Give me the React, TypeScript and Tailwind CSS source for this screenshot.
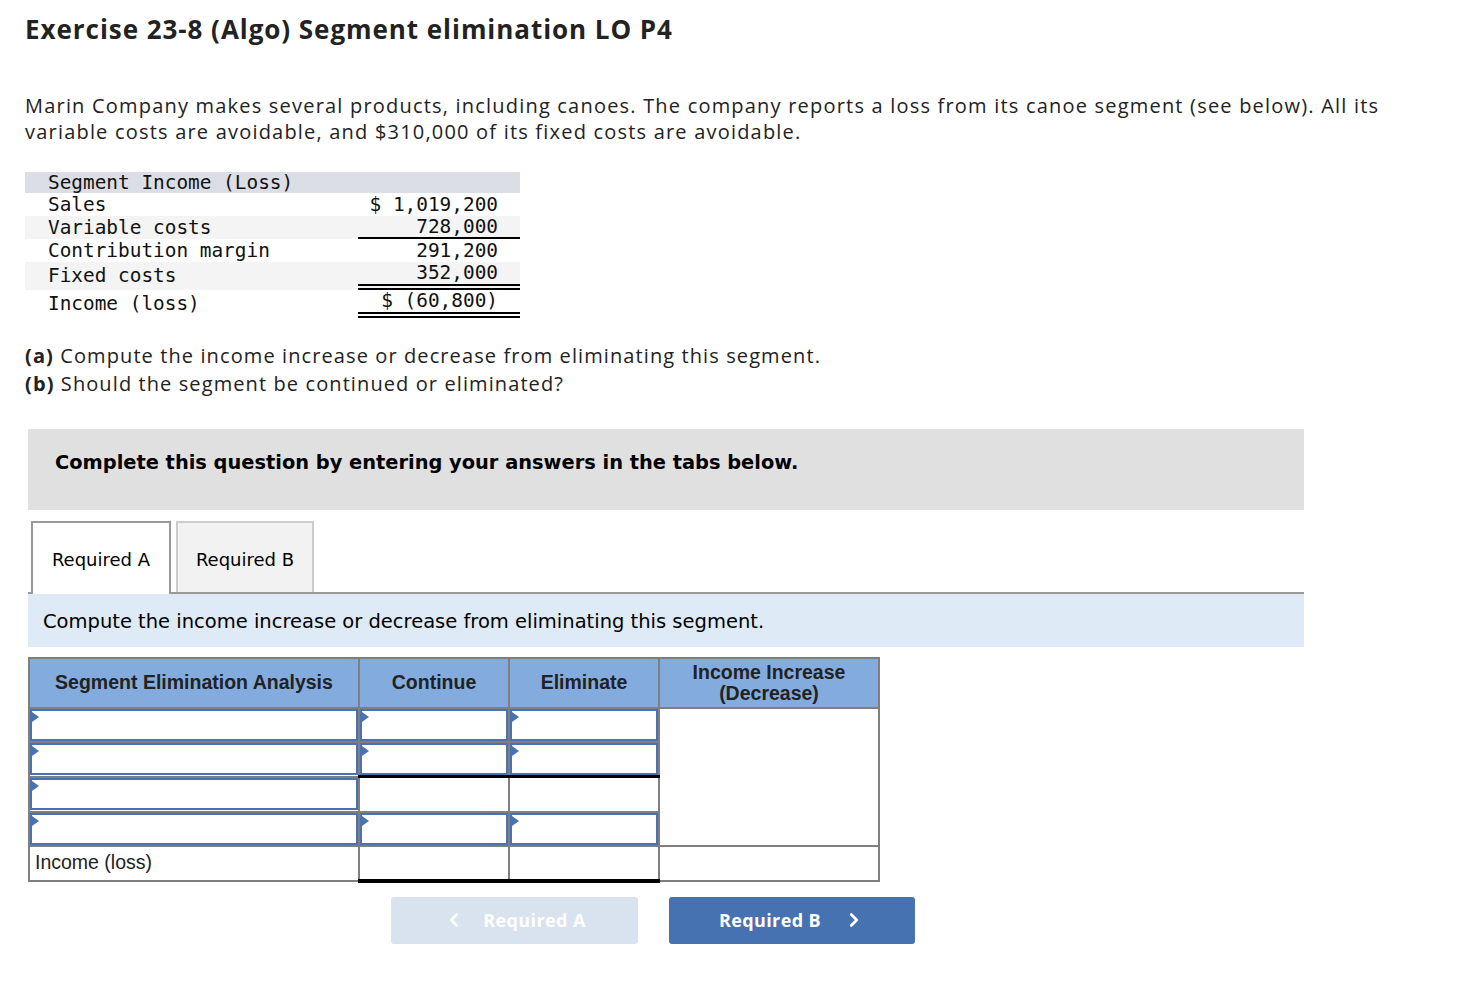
import { ChevronLeft, ChevronRight } from 'lucide-react'

const body = { fontFamily: '"Open Sans", Lato, sans-serif' }
const verdana = { fontFamily: '"DejaVu Sans", Verdana, sans-serif' }
const arial = { fontFamily: '"Liberation Sans", Arial, sans-serif' }
const mono = { fontFamily: '"DejaVu Sans Mono", "Liberation Mono", monospace' }

const rows = [
  { label: 'Sales', value: '$ 1,019,200', bg: 'bg-white', h: 'h-[23px]', line: '' },
  { label: 'Variable costs', value: '728,000', bg: 'bg-[#f4f4f4]', h: 'h-[23px]', line: 'border-b-2 border-black' },
  { label: 'Contribution margin', value: '291,200', bg: 'bg-white', h: 'h-[23px]', line: '' },
  { label: 'Fixed costs', value: '352,000', bg: 'bg-[#f4f4f4]', h: 'h-[28px]', line: 'border-b-[6px] border-double border-black' },
  { label: 'Income (loss)', value: '$ (60,800)', bg: 'bg-white', h: 'h-[28px]', line: 'border-b-[6px] border-double border-black' },
]

function Input() {
  return (
    <div className="relative h-[32px] border-2 border-[#4a72b0] bg-white">
      <div className="absolute left-0 top-[1px] h-0 w-0 border-y-[5px] border-l-[7px] border-y-transparent border-l-[#4a72b0]" />
    </div>
  )
}

export default function App() {
  return (
    <div className="min-h-[1004px] bg-white pl-[25px] pt-[13px] text-[#222]" style={body}>
      <h1 className="whitespace-nowrap text-[26px] font-bold leading-[32px] tracking-[0.95px] text-[#222]">
        Exercise 23-8 (Algo) Segment elimination LO P4
      </h1>

      <p className="mt-[48px] whitespace-nowrap text-[20px] leading-[26px] tracking-[1.2px]">
        Marin Company makes several products, including canoes. The company reports a loss from its canoe segment (see below). All its
        <br />
        variable costs are avoidable, and $310,000 of its fixed costs are avoidable.
      </p>

      {/* segment table */}
      <div className="mt-[27px] w-[495px] text-[19.4px] text-[#111]" style={mono}>
        <div className="flex h-[21px] items-center bg-[#dcdee6] pl-[23px] leading-none">Segment Income (Loss)</div>
        {rows.map((r) => (
          <div key={r.label} className={`flex ${r.h} ${r.bg}`}>
            <div className="flex w-[333px] items-center pl-[23px] leading-none">{r.label}</div>
            <div className={`flex flex-1 items-center justify-end pr-[22px] leading-none ${r.line}`}>{r.value}</div>
          </div>
        ))}
      </div>

      <div className="mt-[24px] whitespace-nowrap text-[20px] leading-[28px] tracking-[1.1px]">
        <p><b>(a)</b> Compute the income increase or decrease from eliminating this segment.</p>
        <p><b>(b)</b> Should the segment be continued or eliminated?</p>
      </div>

      <div className="ml-[3px] w-[1276px]">
        <div className="mt-[31px] h-[81px] bg-[#e0e0e0] pl-[27px] pt-[22px] text-[19.4px] font-bold leading-[23px] text-black" style={verdana}>
          Complete this question by entering your answers in the tabs below.
        </div>

        <div className="mt-[11px] flex gap-[5px] border-b-2 border-[#999] pl-[3px] text-[18px] text-black" style={verdana}>
          <div className="-mb-[2px] flex h-[73px] w-[140px] items-center justify-center border-2 border-b-0 border-[#999] bg-white pt-[2px]">
            Required A
          </div>
          <div className="flex h-[71px] w-[138px] items-center justify-center border-2 border-b-0 border-[#ccc] bg-[#f2f2f2] pt-[4px]">
            Required B
          </div>
        </div>

        <div className="flex h-[53px] items-center bg-[#dfeaf7] pl-[15px] pt-[3px] text-[19.5px] text-black" style={verdana}>
          Compute the income increase or decrease from eliminating this segment.
        </div>

        {/* answer table */}
        <table className="mt-[10px] w-[850px] table-fixed border-collapse border-2 border-[#7f7f7f] text-[19.5px] text-[#222]" style={arial}>
          <colgroup>
            <col className="w-[330px]" />
            <col className="w-[150px]" />
            <col className="w-[150px]" />
            <col className="w-[220px]" />
          </colgroup>
          <thead>
            <tr className="h-[50px] bg-[#84abdd] font-bold">
              <th className="border-2 border-[#7f7f7f] font-bold">Segment Elimination Analysis</th>
              <th className="border-2 border-[#7f7f7f] font-bold">Continue</th>
              <th className="border-2 border-[#7f7f7f] font-bold">Eliminate</th>
              <th className="border-2 border-[#7f7f7f] pb-[1px] text-[19.5px] font-bold leading-[21px]">Income Increase<br />(Decrease)</th>
            </tr>
          </thead>
          <tbody>
            <tr className="h-[34px]">
              <td className="border-2 border-[#7f7f7f] p-0"><Input /></td>
              <td className="border-2 border-[#7f7f7f] p-0"><Input /></td>
              <td className="border-2 border-[#7f7f7f] p-0"><Input /></td>
              <td rowSpan={4} className="border-2 border-[#7f7f7f] bg-white p-0" />
            </tr>
            <tr className="h-[34px]">
              <td className="border-2 border-[#7f7f7f] p-0"><Input /></td>
              <td className="border-2 border-[#7f7f7f] p-0"><Input /></td>
              <td className="border-2 border-[#7f7f7f] p-0"><Input /></td>
            </tr>
            <tr className="h-[35px]">
              <td className="border-2 border-[#7f7f7f] p-0"><Input /></td>
              <td className="border-2 border-[#7f7f7f] border-t-[3px] border-t-black p-0" />
              <td className="border-2 border-[#7f7f7f] border-t-[3px] border-t-black p-0" />
            </tr>
            <tr className="h-[34px]">
              <td className="border-2 border-[#7f7f7f] p-0"><Input /></td>
              <td className="border-2 border-[#7f7f7f] p-0"><Input /></td>
              <td className="border-2 border-[#7f7f7f] p-0"><Input /></td>
            </tr>
            <tr className="h-[35px]">
              <td className="border-2 border-[#7f7f7f] pl-[5px] text-[#222]">Income (loss)</td>
              <td className="border-2 border-[#7f7f7f] border-y-black border-t-2 border-b-[4px] p-0" />
              <td className="border-2 border-[#7f7f7f] border-y-black border-t-2 border-b-[4px] p-0" />
              <td className="border-2 border-[#7f7f7f] p-0" />
            </tr>
          </tbody>
        </table>

        <div className="ml-[363px] mt-[14px] flex gap-[31px] text-[18px] font-bold tracking-[0.4px] text-white">
          <div className="flex h-[47px] w-[247px] items-center justify-center gap-[18px] rounded-[3px] bg-[#d9e3ef]">
            <ChevronLeft className="h-[22px] w-[22px]" strokeWidth={3} />
            <span>Required A</span>
          </div>
          <div className="flex h-[47px] w-[246px] items-center justify-center gap-[22px] rounded-[3px] bg-[#4672b2]">
            <span>Required B</span>
            <ChevronRight className="h-[22px] w-[22px]" strokeWidth={3} />
          </div>
        </div>
      </div>
    </div>
  )
}
